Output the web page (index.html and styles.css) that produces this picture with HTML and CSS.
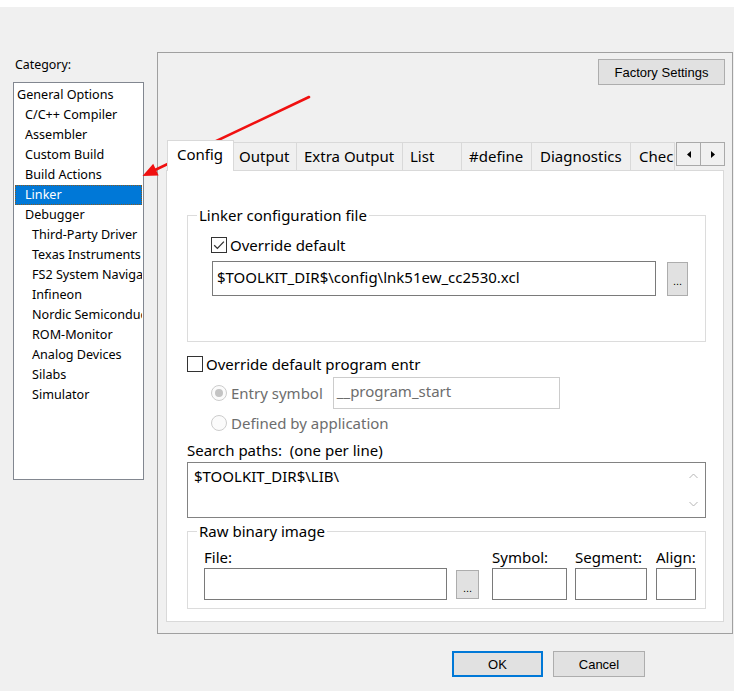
FILE: index.html
```html
<!DOCTYPE html>
<html>
<head>
<meta charset="utf-8">
<title>Options</title>
<link rel="stylesheet" href="styles.css">
</head>
<body>
<div class="topstrip"></div>
<div class="main">
  <div class="catcol">
    <div class="catlabel">Category:</div>
    <div class="catlist">
      <div class="item l0">General Options</div>
      <div class="item l1">C/C++ Compiler</div>
      <div class="item l1">Assembler</div>
      <div class="item l1">Custom Build</div>
      <div class="item l1">Build Actions</div>
      <div class="item l1 sel">Linker</div>
      <div class="item l1">Debugger</div>
      <div class="item l2">Third-Party Driver</div>
      <div class="item l2">Texas Instruments</div>
      <div class="item l2">FS2 System Navigator</div>
      <div class="item l2">Infineon</div>
      <div class="item l2">Nordic Semiconductor</div>
      <div class="item l2">ROM-Monitor</div>
      <div class="item l2">Analog Devices</div>
      <div class="item l2">Silabs</div>
      <div class="item l2">Simulator</div>
    </div>
  </div>
  <div class="rightcol">
    <div class="panel">
      <div class="factory-row"><button class="btn factory">Factory Settings</button></div>
      <div class="tabrow">
        <div class="tab sel t-config">Config</div>
        <div class="tab t-output">Output</div>
        <div class="tab t-extra">Extra Output</div>
        <div class="tab t-list">List</div>
        <div class="tab t-define">#define</div>
        <div class="tab t-diag">Diagnostics</div>
        <div class="tab t-chec">Checksum</div>
        <div class="tabscroll">
          <span class="sbtn"><svg width="4" height="7" viewBox="0 0 4 7"><polygon points="4,0 4,7 0,3.5" fill="#000"/></svg></span>
          <span class="sbtn"><svg width="4" height="7" viewBox="0 0 4 7"><polygon points="0,0 0,7 4,3.5" fill="#000"/></svg></span>
        </div>
      </div>
      <div class="tabpage">
        <fieldset class="group g1">
          <legend>Linker configuration file</legend>
          <div class="g1body">
            <div class="chkrow">
              <svg class="cb" width="16" height="16" viewBox="0 0 16 16"><rect x="0.5" y="0.5" width="15" height="15" fill="#fff" stroke="#333"/><path d="M3.2 8.3 L6.4 11.4 L12.9 4.6" fill="none" stroke="#333" stroke-width="1.3"/></svg>
              <span class="lbl">Override default</span>
            </div>
            <div class="filerow">
              <div class="input cfgfile">$TOOLKIT_DIR$\config\lnk51ew_cc2530.xcl</div>
              <button class="btn dots">...</button>
            </div>
          </div>
        </fieldset>
        <div class="chkrow entryhdr">
          <svg class="cb" width="16" height="16" viewBox="0 0 16 16"><rect x="0.5" y="0.5" width="15" height="15" fill="#fff" stroke="#333"/></svg>
          <span class="lbl">Override default program entr</span>
        </div>
        <div class="radiorow r1">
          <svg class="rb" width="16" height="16" viewBox="0 0 16 16"><circle cx="8" cy="8" r="7.5" fill="#fbfbfb" stroke="#cccccc"/><circle cx="8" cy="8" r="4" fill="#c4c4c4"/></svg>
          <span class="lbl dis">Entry symbol</span>
          <div class="input entry">__program_start</div>
        </div>
        <div class="radiorow r2">
          <svg class="rb" width="16" height="16" viewBox="0 0 16 16"><circle cx="8" cy="8" r="7.5" fill="#fbfbfb" stroke="#cccccc"/></svg>
          <span class="lbl dis">Defined by application</span>
        </div>
        <div class="searchlbl">Search paths:&nbsp; (one per line)</div>
        <div class="textarea">
          <div class="ta-text">$TOOLKIT_DIR$\LIB\</div>
          <div class="ta-scroll">
            <svg width="9" height="6" viewBox="0 0 9 6"><path d="M0.5 5 L4.5 1 L8.5 5" fill="none" stroke="#b4b4b4" stroke-width="1"/></svg>
            <svg width="9" height="6" viewBox="0 0 9 6"><path d="M0.5 1 L4.5 5 L8.5 1" fill="none" stroke="#b4b4b4" stroke-width="1"/></svg>
          </div>
        </div>
        <fieldset class="group g2">
          <legend>Raw binary image</legend>
          <div class="rawgrid">
            <div class="rlbl">File:</div>
            <div></div>
            <div class="rlbl">Symbol:</div>
            <div class="rlbl">Segment:</div>
            <div class="rlbl">Align:</div>
            <div class="input rfile"></div>
            <button class="btn dots rdots">...</button>
            <div class="input rsym"></div>
            <div class="input rseg"></div>
            <div class="input ralign"></div>
          </div>
        </fieldset>
      </div>
    </div>
    <div class="btnrow">
      <button class="btn ok">OK</button>
      <button class="btn cancel">Cancel</button>
    </div>
  </div>
</div>
<svg class="arrow" width="734" height="691" viewBox="0 0 734 691">
  <line x1="309" y1="97" x2="155" y2="170" stroke="#f01010" stroke-width="2.6" stroke-linecap="round"/>
  <polygon points="142.5,176 158.6,175.6 153.2,163.8" fill="#f01010"/>
</svg>
</body>
</html>
```

FILE: styles.css
```css
* { box-sizing: border-box; }
html, body { margin: 0; padding: 0; }
body {
  width: 734px;
  height: 691px;
  overflow: hidden;
  position: relative;
  background: #f0f0f0;
  font-family: "Noto Sans", "Open Sans", sans-serif;
  color: #000;
}
.topstrip { height: 7px; background: #fff; }
.main {
  display: flex;
  align-items: flex-start;
  padding-left: 13px;
  margin-top: 45px;
}

/* ---------- category list ---------- */
.catcol { width: 131px; flex: none; padding-top: 3px; }
.catlabel { font-size: 12.4px; line-height: 20px; padding-left: 2px; color: #000; }
.catlist {
  margin-top: 7px;
  height: 398px;
  background: #fff;
  border: 1px solid #828790;
  padding: 2px 1px 1px 1px;
  display: flex;
  flex-direction: column;
  overflow: hidden;
}
.item {
  flex: none;
  height: 20px;
  line-height: 20px;
  font-size: 12.6px;
  white-space: nowrap;
  overflow: hidden;
  color: #000;
}
.item.l0 { padding-left: 2px; }
.item.l1 { padding-left: 10px; }
.item.l2 { padding-left: 17px; }
.item.sel {
  background: #0078d7;
  color: #fff;
  border: 1px dotted #8a5a1e;
  line-height: 18px;
  padding-left: 9px;
}

/* ---------- right panel ---------- */
.rightcol { margin-left: 13px; width: 577px; flex: none; }
.panel {
  width: 576px;
  height: 582px;
  border: 1px solid #a0a0a0;
  padding: 6px 7px 11px 8px;
  display: flex;
  flex-direction: column;
}
.btn {
  font-family: "Liberation Sans", Arial, sans-serif;
  font-size: 13px;
  color: #000;
  background: #e1e1e1;
  border: 1px solid #adadad;
  padding: 0;
  margin: 0;
  display: flex;
  align-items: center;
  justify-content: center;
}
.factory-row { display: flex; justify-content: flex-end; }
.factory { width: 127px; height: 26px; }

/* tabs */
.tabrow {
  margin-top: 55px;
  height: 30px;
  display: flex;
  align-items: flex-start;
  padding-left: 1px;
}
.tab {
  flex: none;
  height: 28px;
  margin-top: 2px;
  margin-right: -1px;
  border: 1px solid #d9d9d9;
  border-bottom: none;
  background: #f0f0f0;
  font-size: 15px;
  line-height: 26px;
  white-space: nowrap;
  overflow: hidden;
  padding-left: 7px;
}
.tab.sel {
  height: 31px;
  margin-top: 0;
  background: #fff;
  position: relative;
  z-index: 1;
  line-height: 27px;
}
.t-config { width: 67px; padding-left: 9px; }
.t-output { width: 64px; padding-left: 5px; }
.t-extra { width: 107px; }
.t-list { width: 60px; }
.t-define { width: 71px; }
.t-diag { width: 100px; padding-left: 8px; }
.t-chec { width: 45px; padding-left: 8px; }
.tabscroll {
  display: flex;
  margin-top: 2px;
  margin-left: 2px;
  position: relative;
  z-index: 2;
}
.sbtn {
  width: 25px;
  height: 24px;
  border: 1px solid #a9a9a9;
  background: #f0f0f0;
  display: flex;
  align-items: center;
  justify-content: center;
}
.sbtn + .sbtn { margin-left: -1px; }

.tabpage {
  flex: 1;
  margin-right: 1px;
  background: #fff;
  border: 1px solid #d9d9d9;
  padding: 34px 17px 0 20px;
  display: flex;
  flex-direction: column;
  font-size: 15px;
}
.group {
  margin: 0;
  padding: 0;
  min-width: 0;
  border: 1px solid #dcdcdc;
}
.group legend {
  margin-left: 9px;
  padding: 0 2px;
  font-size: 15px;
  line-height: 20px;
}
.g1body { padding: 10px 0 45px 23px; }
.chkrow {
  display: flex;
  align-items: center;
  height: 20px;
  line-height: 20px;
}
.chkrow .cb { flex: none; margin-right: 3px; }
.lbl { white-space: nowrap; }
.lbl.dis { color: #6d6d6d; }
.filerow { display: flex; margin-top: 6px; padding-left: 1px; }
.input {
  background: #fff;
  border: 1px solid #7a7a7a;
  white-space: nowrap;
  overflow: hidden;
}
.cfgfile {
  width: 444px;
  height: 35px;
  line-height: 30px;
  padding-left: 4px;
}
.dots {
  width: 21px;
  height: 34px;
  margin-left: 11px;
  margin-top: 1px;
  font-size: 11px;
  padding-top: 4px;
}
.entryhdr { margin-top: 12px; }
.radiorow {
  display: flex;
  align-items: center;
  padding-left: 24px;
}
.radiorow .rb { flex: none; margin-right: 4px; }
.r1 { margin-top: 3px; height: 32px; }
.r2 { margin-top: 4px; height: 20px; line-height: 20px; }
.entry {
  width: 227px;
  height: 32px;
  margin-left: 10px;
  border-color: #cccccc;
  color: #6d6d6d;
  line-height: 26px;
  padding-left: 3px;
}
.searchlbl { margin-top: 7px; line-height: 20px; white-space: nowrap; }
.textarea {
  margin-top: 2px;
  height: 56px;
  border: 1px solid #828282;
  background: #fff;
  display: flex;
}
.ta-text { flex: 1; padding: 3px 0 0 6px; line-height: 20px; }
.ta-scroll {
  width: 24px;
  padding: 10px 0 10px 0;
  display: flex;
  flex-direction: column;
  align-items: center;
  justify-content: space-between;
}
.g2 { margin-top: 3px; }
.rawgrid {
  display: grid;
  grid-template-columns: 252px 36px 83px 81px 40px;
  grid-template-rows: 20px 32px;
  row-gap: 1px;
  padding: 6px 8px 8px 16px;
}
.rlbl { line-height: 20px; white-space: nowrap; }
.rfile { width: 243px; height: 32px; }
.rdots { width: 23px; height: 29px; margin: 2px 0 0 0; padding-top: 6px; }
.rsym { width: 75px; height: 32px; }
.rseg { width: 72px; height: 32px; }
.ralign { width: 40px; height: 32px; }

.btnrow {
  display: flex;
  gap: 10px;
  margin-top: 17px;
  padding-left: 295px;
}
.ok { width: 91px; height: 26px; border: 2px solid #0078d7; }
.cancel { width: 92px; height: 26px; }

.arrow {
  position: absolute;
  left: 0;
  top: 0;
  pointer-events: none;
}
```
